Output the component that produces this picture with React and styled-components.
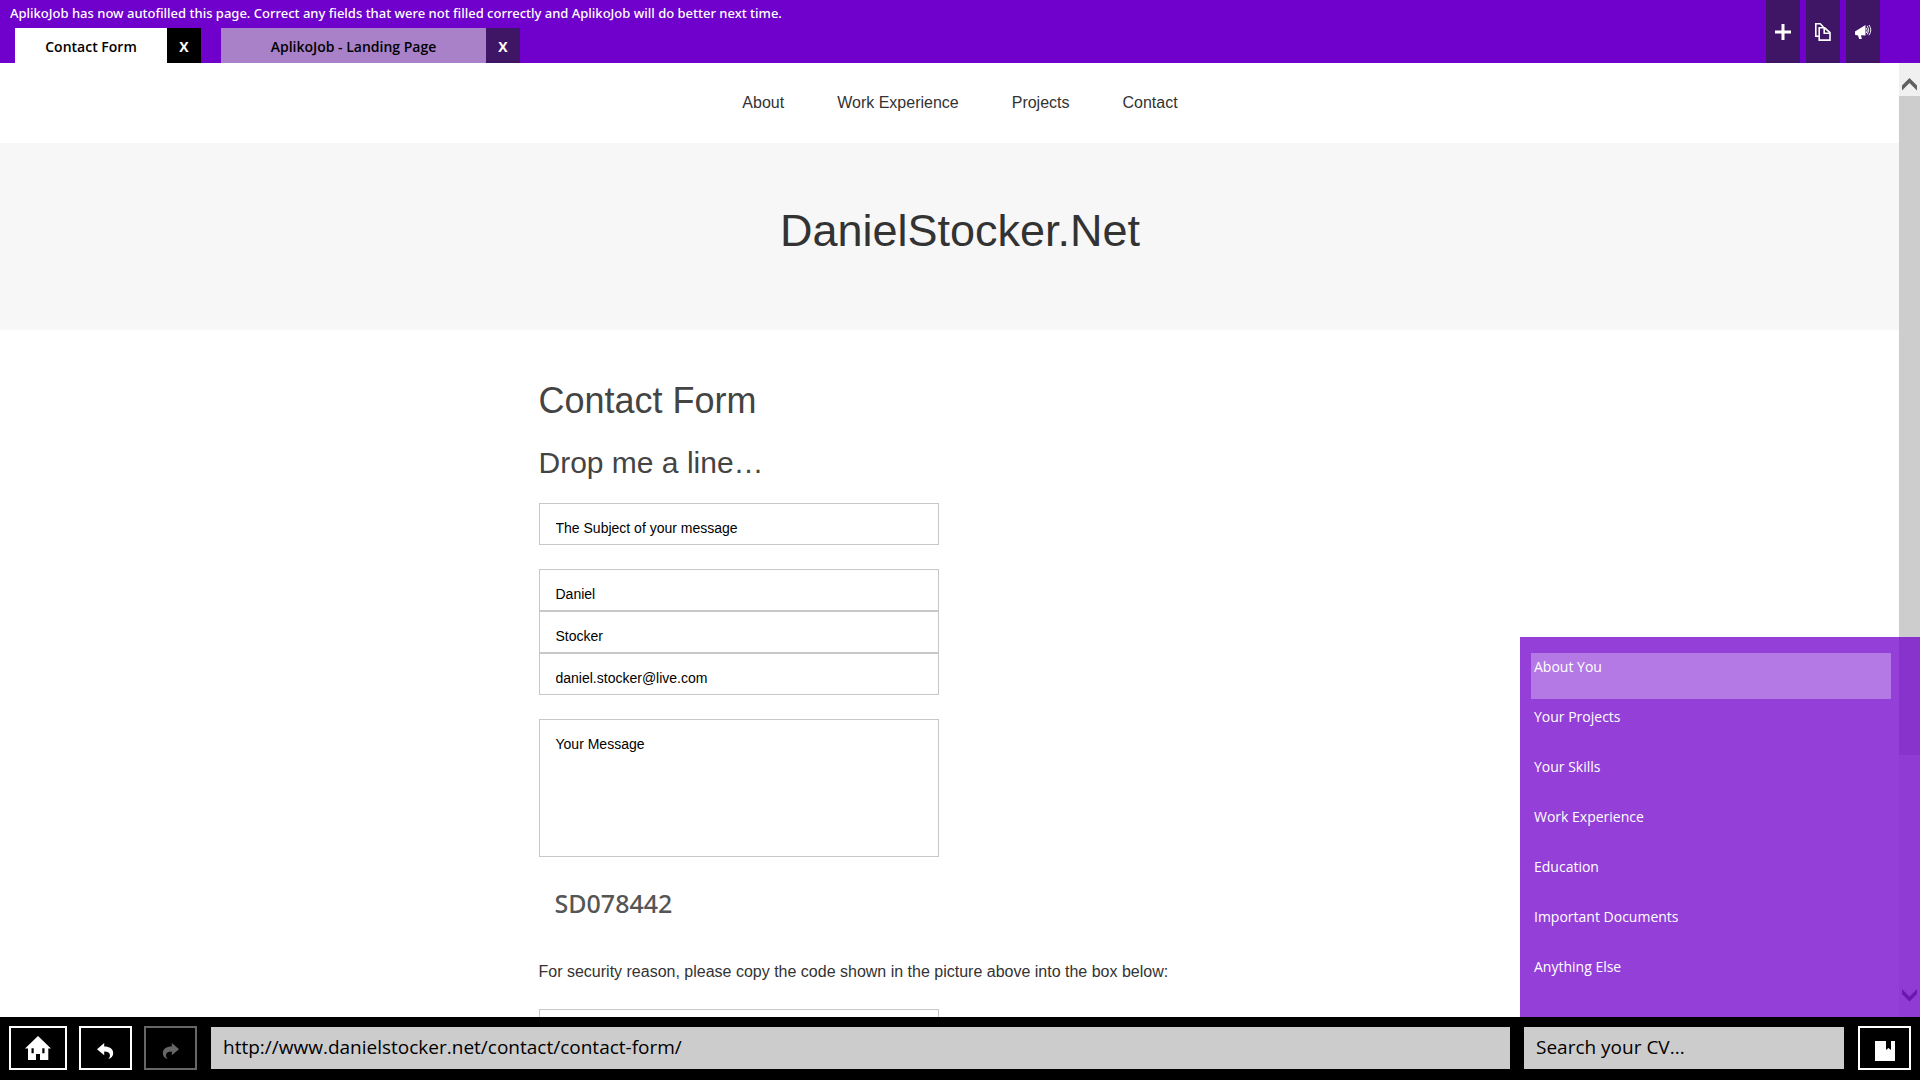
import React from "react";
import styled, { createGlobalStyle } from "styled-components";

const ui = '"Segoe UI", "Open Sans", "Noto Sans", sans-serif';
const web = '"Liberation Sans", Arial, sans-serif';

const GlobalStyle = createGlobalStyle`
  *, *::before, *::after { box-sizing: border-box; }
  body { margin: 0; background: #fff; }
  h1, h2, p, ul { margin: 0; padding: 0; font-weight: 400; }
  ul { list-style: none; }
  button, input, textarea { font: inherit; border-radius: 0; margin: 0; }
  button { cursor: pointer; padding: 0; }
`;

const Shell = styled.div`
  display: flex;
  flex-direction: column;
  height: 100vh;
  font-family: ${ui};
`;

const TopBar = styled.header`
  display: flex;
  justify-content: space-between;
  flex: none;
  height: 63px;
  padding-right: 40px;
  background: #7000cb;
`;

const TopLeft = styled.div`
  display: flex;
  flex-direction: column;
  justify-content: space-between;
`;

const Notice = styled.p`
  padding-left: 10px;
  font-family: "Noto Sans", sans-serif;
  font-size: 13px;
  font-weight: 500;
  line-height: 27px;
  color: #fff;
`;

const Tabs = styled.div`
  display: flex;
  gap: 20px;
  padding-left: 15px;
`;

const Tab = styled.div`
  display: flex;
  height: 35px;
`;

const TabLabel = styled.button`
  width: ${(p) => p.$width}px;
  padding-top: 2px;
  border: 0;
  background: ${(p) => (p.$active ? "#fff" : "#a881c8")};
  color: #000;
  font-size: 14px;
  font-weight: 600;
`;

const TabClose = styled.button`
  width: 34px;
  padding-top: 2px;
  border: 0;
  background: ${(p) => (p.$active ? "#000" : "#3f1666")};
  color: #fff;
  font-size: 14px;
  font-weight: 700;
`;

const Actions = styled.div`
  display: flex;
  gap: 6px;
`;

const Action = styled.button`
  display: flex;
  align-items: center;
  justify-content: center;
  width: 34px;
  border: 0;
  background: #3f1666;
  color: #fff;
`;

const Body = styled.div`
  position: relative;
  display: flex;
  flex: 1;
  min-height: 0;
`;

const Page = styled.main`
  flex: 1;
  overflow: hidden;
  font-family: ${web};
  color: #333;
`;

const Nav = styled.nav`
  display: flex;
  align-items: center;
  justify-content: center;
  gap: 53px;
  height: 80px;
  padding-left: 21px;
`;

const NavLink = styled.a`
  font-size: 16px;
  color: #333;
  text-decoration: none;
`;

const Hero = styled.div`
  display: flex;
  align-items: center;
  justify-content: center;
  height: 187px;
  padding-left: 21px;
  padding-bottom: 12px;
  background: #f7f7f7;
`;

const SiteTitle = styled.h1`
  font-size: 45px;
  line-height: 54px;
`;

const Form = styled.form`
  width: 822px;
  margin: 0 auto;
  padding-top: 48px;
`;

const Heading = styled.h1`
  font-size: 36px;
  line-height: 46px;
  color: #444;
`;

const SubHeading = styled.h2`
  margin-top: 19px;
  margin-bottom: 21px;
  font-size: 30px;
  line-height: 39px;
  color: #444;
`;

const FieldGroup = styled.div`
  display: flex;
  flex-direction: column;
  width: 400px;
  margin-bottom: 24px;
`;

const Field = styled.input`
  height: 42px;
  padding: 16px 16px 8px;
  border: 1px solid #c8c8c8;
  outline: 0;
  background: #fff;
  color: #000;
  font-size: 14px;
`;

const Message = styled.textarea`
  height: 138px;
  padding: 16px;
  border: 1px solid #c8c8c8;
  outline: 0;
  resize: none;
  background: #fff;
  color: #000;
  font-size: 14px;
  line-height: 16px;
`;

const Code = styled.p`
  padding: 5px 16px;
  font-family: "Noto Sans", sans-serif;
  font-size: 25px;
  font-weight: 500;
  line-height: 34px;
  color: #555;
`;

const Hint = styled.label`
  display: block;
  margin: 37px 0 27px;
  font-size: 16px;
  line-height: 20px;
`;

const ScrollBar = styled.div`
  display: flex;
  flex-direction: column;
  flex: none;
  width: 21px;
  background: #f0f0f0;
`;

const ScrollArrow = styled.button`
  display: flex;
  align-items: center;
  justify-content: center;
  height: 33px;
  padding: ${(p) => (p.$down ? "0 0 10px" : "10px 0 0")};
  border: 0;
  background: #f0f0f0;
`;

const Thumb = styled.div`
  flex: 659;
  background: #cdcdcd;
`;

const Track = styled.div`
  flex: 229;
`;

const Panel = styled.aside`
  position: absolute;
  right: 0;
  bottom: 0;
  width: 400px;
  height: 380px;
  padding: 16px 29px 0 11px;
  background: rgba(112, 0, 203, 0.75);
`;

const PanelList = styled.ul`
  display: flex;
  flex-direction: column;
  gap: 4px;
`;

const PanelItem = styled.button`
  display: flex;
  width: 100%;
  height: 46px;
  padding: 4px 3px;
  border: 0;
  background: ${(p) => (p.$active ? "rgba(255, 255, 255, 0.3)" : "transparent")};
  color: #fff;
  font-size: 14px;
  line-height: 20px;
`;

const BottomBar = styled.footer`
  display: flex;
  align-items: center;
  flex: none;
  gap: 14px;
  height: 63px;
  padding: 0 9px 1px;
  background: #000;
`;

const NavButtons = styled.div`
  display: flex;
  gap: 12px;
`;

const Square = styled.button`
  display: flex;
  align-items: center;
  justify-content: center;
  flex: none;
  width: ${(p) => (p.$wide ? 58 : 53)}px;
  height: 44px;
  padding-top: ${(p) => (p.$wide ? 0 : 6)}px;
  border: 2px solid #fff;
  background: #000;
  color: #fff;

  &:disabled {
    border-color: #666;
    color: #666;
  }
`;

const BarInput = styled.input`
  flex: ${(p) => (p.$grow ? "1" : "none")};
  width: 320px;
  min-width: 0;
  height: 42px;
  padding: 0 12px 3px;
  border: 0;
  outline: 0;
  background: #ccc;
  color: #000;
  font-size: 19px;

  &::placeholder {
    color: #000;
    opacity: 1;
  }
`;

const PlusIcon = () => (
  <svg width="16" height="16" viewBox="0 0 16 16" fill="currentColor" aria-hidden="true">
    <path d="M6.5 0h3v6.5H16v3H9.5V16h-3V9.5H0v-3h6.5z" />
  </svg>
);

const PagesIcon = () => (
  <svg width="16" height="18" viewBox="0 0 16 18" fill="none" stroke="currentColor" strokeWidth="1.6" aria-hidden="true">
    <path d="M4 13.2H.8V.8h4.400L8.400 4" />
    <path d="M4.200 4.800h5.500l5.300 4.800v7.500H4.200z" />
    <path d="M9.200 5v5.200h5.500" />
  </svg>
);

const MegaphoneIcon = () => (
  <svg width="17" height="16" viewBox="0 0 17 16" aria-hidden="true">
    <path d="M0 7.5 10.5 1v10.5L6 11.2 6.8 15H4.2L3 11.4 0 10.8z" fill="currentColor" />
    <path d="M11.3 4q1.8 2.5 0 5M12.3 1.8q3 4.2 0 8.6M14 1q3.6 5 0 10.2" fill="none" stroke="currentColor" strokeWidth=".9" />
  </svg>
);

const HomeIcon = () => (
  <svg width="26" height="24" viewBox="0 0 26 24" fill="currentColor" fillRule="evenodd" aria-hidden="true">
    <path d="M13 0 26 12.600H23.300V24H15v-6h-4v6H3V12.600H0zM6.500 12.200v5h2.200v-5zM17.300 12.200v5h2.200v-5z" />
  </svg>
);

const BackIcon = ({ flip }) => (
  <svg width="17" height="16" viewBox="0 0 17 16" fill="currentColor" aria-hidden="true">
    <path
      transform={flip ? "matrix(-1 0 0 1 17 0)" : undefined}
      d="M0 6.2 7.2 0v3.600c5.600 0 9 2.500 9 6.600 0 3-2 5.200-5 5.800 1.400-1.300 2-2.700 1.700-4.200C12.500 9.700 10.600 8.600 7.200 8.600v3.700z"
    />
  </svg>
);

const BookIcon = () => (
  <svg width="20" height="20" viewBox="0 0 20 20" fill="currentColor" aria-hidden="true">
    <path d="M0 0h11v9l2.500-2L16 9V0h4v20H0z" />
  </svg>
);

const Chevron = ({ down }) => (
  <svg width="15" height="13" viewBox="0 0 15 13" fill="#606060" aria-hidden="true">
    <path d={down ? "M0 0 7.500 7.500 15 0v5L7.500 12.500 0 5z" : "M0 12.500 7.500 5 15 12.500v-5L7.500 0 0 7.500z"} />
  </svg>
);

const sections = [
  "About You",
  "Your Projects",
  "Your Skills",
  "Work Experience",
  "Education",
  "Important Documents",
  "Anything Else",
];

export default function App() {
  return (
    <Shell>
      <GlobalStyle />
      <TopBar>
        <TopLeft>
          <Notice>
            AplikoJob has now autofilled this page. Correct any fields that were not filled correctly and AplikoJob will do better next time.
          </Notice>
          <Tabs>
            <Tab>
              <TabLabel $active $width={152}>Contact Form</TabLabel>
              <TabClose $active>X</TabClose>
            </Tab>
            <Tab>
              <TabLabel $width={265}>AplikoJob - Landing Page</TabLabel>
              <TabClose>X</TabClose>
            </Tab>
          </Tabs>
        </TopLeft>
        <Actions>
          <Action aria-label="New tab"><PlusIcon /></Action>
          <Action aria-label="Copy page"><PagesIcon /></Action>
          <Action aria-label="Feedback"><MegaphoneIcon /></Action>
        </Actions>
      </TopBar>

      <Body>
        <Page>
          <Nav>
            {["About", "Work Experience", "Projects", "Contact"].map((t) => (
              <NavLink key={t} href="#">{t}</NavLink>
            ))}
          </Nav>
          <Hero>
            <SiteTitle>DanielStocker.Net</SiteTitle>
          </Hero>
          <Form onSubmit={(e) => e.preventDefault()}>
            <Heading>Contact Form</Heading>
            <SubHeading>Drop me a line…</SubHeading>
            <FieldGroup>
              <Field aria-label="Subject" defaultValue="The Subject of your message" />
            </FieldGroup>
            <FieldGroup>
              <Field aria-label="First name" defaultValue="Daniel" />
              <Field aria-label="Last name" defaultValue="Stocker" />
              <Field aria-label="Email" type="email" defaultValue="daniel.stocker@live.com" />
            </FieldGroup>
            <FieldGroup>
              <Message aria-label="Message" defaultValue="Your Message" />
            </FieldGroup>
            <Code>SD078442</Code>
            <Hint htmlFor="code">For security reason, please copy the code shown in the picture above into the box below:</Hint>
            <FieldGroup>
              <Field id="code" />
            </FieldGroup>
          </Form>
        </Page>
        <ScrollBar>
          <ScrollArrow aria-label="Scroll up"><Chevron /></ScrollArrow>
          <Thumb />
          <Track />
          <ScrollArrow $down aria-label="Scroll down"><Chevron down /></ScrollArrow>
        </ScrollBar>
        <Panel>
          <PanelList>
            {sections.map((s, i) => (
              <li key={s}><PanelItem $active={i === 0}>{s}</PanelItem></li>
            ))}
          </PanelList>
        </Panel>
      </Body>

      <BottomBar>
        <NavButtons>
          <Square $wide aria-label="Home"><HomeIcon /></Square>
          <Square aria-label="Back"><BackIcon /></Square>
          <Square aria-label="Forward" disabled><BackIcon flip /></Square>
        </NavButtons>
        <BarInput $grow aria-label="Address" defaultValue="http://www.danielstocker.net/contact/contact-form/" />
        <BarInput aria-label="Search your CV" placeholder="Search your CV..." />
        <Square aria-label="Bookmarks"><BookIcon /></Square>
      </BottomBar>
    </Shell>
  );
}
